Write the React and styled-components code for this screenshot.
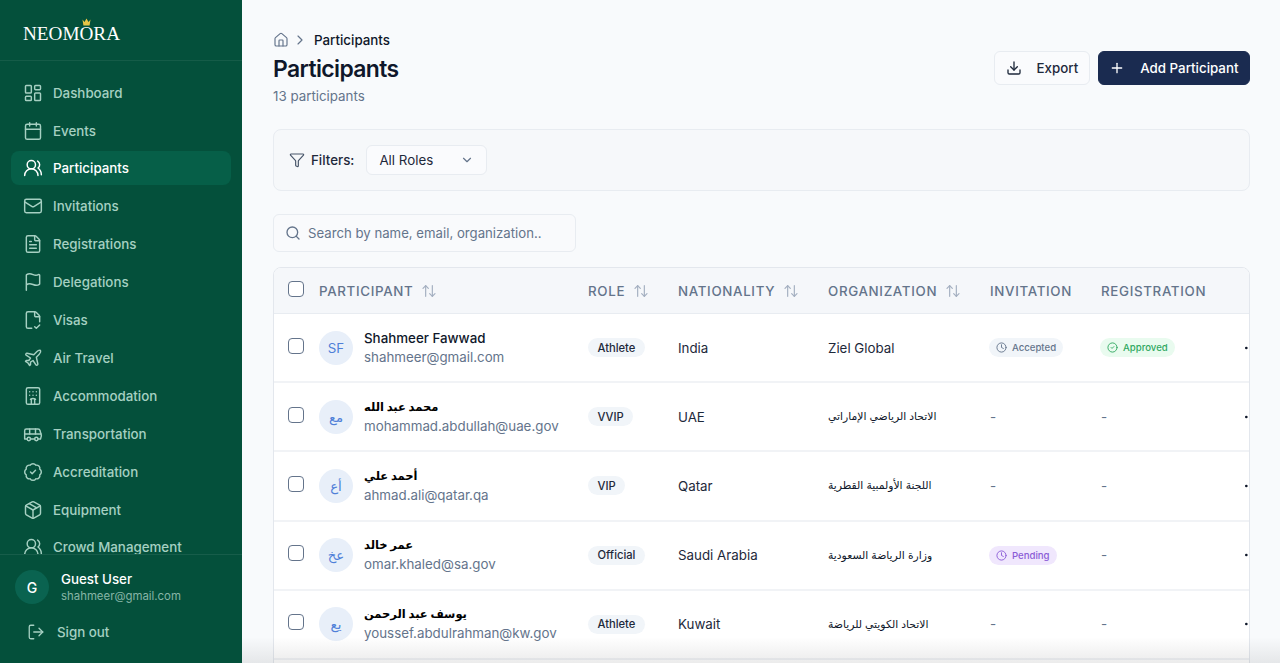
import styled, { createGlobalStyle } from "styled-components"
import {
  ArrowUpDown, BadgeCheck, Bus, Calendar, ChevronDown, ChevronRight, CircleCheck, Clock, Download, Ellipsis,
  FileCheck2, FileText, Flag, Funnel, Hotel, House, LayoutDashboard, LogOut, Mail, Package, Plane, Plus, Search, UsersRound,
} from "lucide-react"

const GlobalStyle = createGlobalStyle`
  html, body, #root {
    margin: 0;
    height: 100%;
  }
  body {
    font-family: Inter, "Noto Sans", "DejaVu Sans", sans-serif;
    overflow: hidden;
    background: #f8fafc;
  }
  * {
    box-sizing: border-box;
  }
`

const Page = styled.div`
  display: flex;
  height: 100%;
`

const Sidebar = styled.aside`
  width: 242px;
  flex-shrink: 0;
  display: flex;
  flex-direction: column;
  background: #04503b;
`
const LogoBar = styled.div`
  height: 61px;
  flex-shrink: 0;
  padding: 8px 23px 0;
  display: flex;
  align-items: center;
  border-bottom: 1px solid rgba(255, 255, 255, 0.07);
`
const Logo = styled.div`
  position: relative;
  font-family: "Liberation Serif", serif;
  font-size: 19.2px;
  line-height: 24px;
  color: #fff;
`
const Crown = styled.svg`
  position: absolute;
  left: 59px;
  top: -4px;
`
const Nav = styled.nav`
  flex: 1;
  min-height: 0;
  overflow: hidden;
  padding: 14.6px 11px 0;
  display: flex;
  flex-direction: column;
  gap: 3.92px;
`
const NavItem = styled.a`
  height: 34px;
  flex-shrink: 0;
  padding: 0 12px;
  display: flex;
  align-items: center;
  gap: 10px;
  border-radius: 8px;
  font-size: 13.33px;
  font-weight: 500;
  color: ${props => (props.$active ? "#ffffff" : "#a6d0c2")};
  background: ${props => (props.$active ? "#065f48" : "transparent")};
`
const SideFooter = styled.div`
  flex-shrink: 0;
  padding: 15px 15px 15px;
  border-top: 1px solid rgba(255, 255, 255, 0.08);
`
const UserRow = styled.div`
  display: flex;
  align-items: center;
  gap: 12px;
`
const UserAvatar = styled.div`
  width: 34px;
  height: 34px;
  border-radius: 50%;
  background: #0a6350;
  color: #fff;
  display: flex;
  align-items: center;
  justify-content: center;
  font-size: 14px;
  font-weight: 500;
`
const UserName = styled.div`
  font-size: 13.33px;
  line-height: 18px;
  font-weight: 500;
  color: #fff;
`
const UserMail = styled.div`
  font-size: 11.4px;
  line-height: 16px;
  color: #86b5a6;
`
const SignOut = styled.div`
  height: 32px;
  margin-top: 12px;
  padding-left: 12px;
  display: flex;
  align-items: center;
  gap: 12px;
  font-size: 13.33px;
  font-weight: 500;
  color: #a6d0c2;
`

const Main = styled.main`
  position: relative;
  flex: 1;
  min-width: 0;
  height: 100%;
  overflow: hidden;
  padding: 29px 30px 0 31px;
`
const BottomShade = styled.div`
  position: absolute;
  left: 0;
  right: 0;
  bottom: 0;
  height: 26px;
  background: linear-gradient(to bottom, rgba(40, 40, 40, 0), rgba(40, 40, 40, 0.09));
  pointer-events: none;
`
const Header = styled.div`
  display: flex;
  justify-content: space-between;
  align-items: flex-start;
`
const Breadcrumb = styled.div`
  height: 20px;
  margin-top: 1px;
  display: flex;
  align-items: center;
  gap: 3px;
  font-size: 13.33px;
  font-weight: 500;
  color: #0f172a;
  svg {
    color: #64748b;
  }
  span {
    margin-left: 3px;
  }
`
const Title = styled.h1`
  margin: 2px 0 0;
  font-size: 22.9px;
  line-height: 34px;
  font-weight: 600;
  letter-spacing: -0.6px;
  color: #0f172a;
`
const SubTitle = styled.div`
  margin-top: -1px;
  font-size: 13.33px;
  line-height: 22px;
  color: #64748b;
`
const Actions = styled.div`
  margin-top: 22px;
  display: flex;
  gap: 8px;
`
const Button = styled.button`
  height: 34px;
  padding: 0 10.5px;
  display: flex;
  align-items: center;
  gap: 15px;
  border-radius: 6px;
  font-family: inherit;
  font-size: 13.33px;
  font-weight: 500;
  border: 1px solid ${props => (props.$primary ? "#1a2b50" : "#e8ecf1")};
  background: ${props => (props.$primary ? "#1a2b50" : "#fafbfd")};
  color: ${props => (props.$primary ? "#ffffff" : "#1e293b")};
`
const FilterBar = styled.div`
  height: 62px;
  margin-top: 22px;
  padding: 0 15px;
  display: flex;
  align-items: center;
  border: 1px solid #e8ecf1;
  border-radius: 8px;
  background: #f6f8fa;
  font-size: 13.33px;
  svg {
    flex-shrink: 0;
  }
`
const FilterLabel = styled.span`
  margin: 0 12px 0 6px;
  font-weight: 500;
  color: #1e293b;
`
const Select = styled.div`
  width: 121px;
  height: 30px;
  padding: 0 12px;
  display: flex;
  align-items: center;
  justify-content: space-between;
  border: 1px solid #e8ecf1;
  border-radius: 6px;
  background: #fafbfd;
  color: #1e293b;
`
const SearchBox = styled.div`
  width: 303px;
  height: 38px;
  margin-top: 23px;
  padding: 0 11px;
  display: flex;
  align-items: center;
  gap: 7px;
  border: 1px solid #e8ecf1;
  border-radius: 6px;
  background: #f9fafc;
  font-size: 13.2px;
  color: #64748b;
`
const Table = styled.div`
  margin-top: 15px;
  overflow: hidden;
  background: #fff;
  border: 1px solid #e3e7ed;
  border-radius: 8px 8px 0 0;
`
const Row = styled.div`
  display: grid;
  grid-template-columns: 45px 269px 90px 150px 162px 111px 142px 40px;
  align-items: center;
  height: ${props => (props.$head ? "46px" : "69.2px")};
  background: ${props => (props.$head ? "#f5f7fa" : "#ffffff")};
  border-bottom: ${props => (props.$head ? "1px solid #e8ecf1" : "2px solid #f1f3f6")};
`
const Spacer = styled.div`
  height: 69px;
`
const CheckCell = styled.div`
  padding-left: 14px;
  margin-top: -4px;
  display: flex;
`
const CheckBox = styled.span`
  width: 16px;
  height: 16px;
  border: 1.5px solid #64748b;
  border-radius: 4px;
  background: #fff;
`
const HeadCell = styled.div`
  display: flex;
  align-items: center;
  gap: 8px;
  font-size: 13.33px;
  font-weight: 500;
  letter-spacing: 0.67px;
  white-space: nowrap;
  color: #64748b;
  svg {
    color: #a3afc0;
  }
`
const Person = styled.div`
  display: flex;
  align-items: center;
  gap: 11px;
`
const Avatar = styled.div`
  width: 34px;
  height: 34px;
  border-radius: 50%;
  flex-shrink: 0;
  background: #e8eff9;
  color: #4f7fd8;
  font-size: 13.33px;
  display: flex;
  align-items: center;
  justify-content: center;
`
const Name = styled.div`
  font-size: ${props => (props.$arabic ? "11.5px" : "13.33px")};
  line-height: 19px;
  font-weight: ${props => (props.$arabic ? 700 : 500)};
  color: ${props => (props.$arabic ? "#000000" : "#0f172a")};
`
const Email = styled.div`
  font-size: 13.33px;
  line-height: 19px;
  color: #64748b;
`
const RoleBadge = styled.span`
  justify-self: start;
  padding: 0 9.5px;
  height: 19px;
  display: inline-flex;
  align-items: center;
  border-radius: 10px;
  background: #f1f5f9;
  color: #1e293b;
  font-size: 11.2px;
  font-weight: 500;
`
const Text = styled.div`
  font-size: ${props => (props.$arabic ? "10.8px" : "13.33px")};
  color: ${props => (props.$arabic ? "#0f172a" : "#1e293b")};
`
const Status = styled.span`
  justify-self: start;
  height: 19px;
  margin-left: -1px;
  padding: 0 7px;
  display: inline-flex;
  align-items: center;
  gap: 5px;
  border-radius: 10px;
  font-size: 9.6px;
  font-weight: 500;
  background: ${props => props.$bg};
  color: ${props => props.$color};
`
const Dash = styled.div`
  font-size: 13.33px;
  color: #64748b;
`
const Dots = styled.div`
  display: flex;
  color: #0f172a;
`

const navItems = [
  ["Dashboard", LayoutDashboard],
  ["Events", Calendar],
  ["Participants", UsersRound],
  ["Invitations", Mail],
  ["Registrations", FileText],
  ["Delegations", Flag],
  ["Visas", FileCheck2],
  ["Air Travel", Plane],
  ["Accommodation", Hotel],
  ["Transportation", Bus],
  ["Accreditation", BadgeCheck],
  ["Equipment", Package],
  ["Crowd Management", UsersRound],
]

const statusKinds = {
  Accepted: { bg: "#f1f5f9", color: "#64748b", Icon: Clock },
  Approved: { bg: "#e9fbef", color: "#2fa85f", Icon: CircleCheck },
  Pending: { bg: "#f0e7fd", color: "#8b5cd6", Icon: Clock },
}

const participants = [
  { initials: "SF", name: "Shahmeer Fawwad", email: "shahmeer@gmail.com", role: "Athlete", nationality: "India", org: "Ziel Global", invitation: "Accepted", registration: "Approved" },
  { arabic: true, initials: "مع", name: "محمد عبد الله", email: "mohammad.abdullah@uae.gov", role: "VVIP", nationality: "UAE", org: "الاتحاد الرياضي الإماراتي" },
  { arabic: true, initials: "أع", name: "أحمد علي", email: "ahmad.ali@qatar.qa", role: "VIP", nationality: "Qatar", org: "اللجنة الأولمبية القطرية" },
  { arabic: true, initials: "عخ", name: "عمر خالد", email: "omar.khaled@sa.gov", role: "Official", nationality: "Saudi Arabia", org: "وزارة الرياضة السعودية", invitation: "Pending" },
  { arabic: true, initials: "يع", name: "يوسف عبد الرحمن", email: "youssef.abdulrahman@kw.gov", role: "Athlete", nationality: "Kuwait", org: "الاتحاد الكويتي للرياضة" },
]

const StatusCell = ({ value }) => {
  if (!value) return <Dash>-</Dash>
  const { bg, color, Icon } = statusKinds[value]
  return (
    <Status $bg={bg} $color={color}>
      <Icon size={11} />
      {value}
    </Status>
  )
}

const SortHead = ({ label }) => (
  <HeadCell>
    {label}
    <ArrowUpDown size={16} strokeWidth={1.75} />
  </HeadCell>
)

const App = () => {
  return (
    <Page>
      <GlobalStyle />
      <Sidebar>
        <LogoBar>
          <Logo>
            NEOMORA
            <Crown width="9" height="8" viewBox="0 0 9 8">
              <path d="M0.5 1.5 L2.5 4 L4.5 0.5 L6.5 4 L8.5 1.5 L7.6 7.5 L1.4 7.5 Z" fill="#e8c547" />
            </Crown>
          </Logo>
        </LogoBar>
        <Nav>
          {navItems.map(([label, Icon]) => (
            <NavItem key={label} $active={label === "Participants"}>
              <Icon size={20} strokeWidth={1.75} />
              {label}
            </NavItem>
          ))}
        </Nav>
        <SideFooter>
          <UserRow>
            <UserAvatar>G</UserAvatar>
            <div>
              <UserName>Guest User</UserName>
              <UserMail>shahmeer@gmail.com</UserMail>
            </div>
          </UserRow>
          <SignOut>
            <LogOut size={18} strokeWidth={1.75} />
            Sign out
          </SignOut>
        </SideFooter>
      </Sidebar>
      <Main>
        <Header>
          <div>
            <Breadcrumb>
              <House size={16} strokeWidth={1.75} />
              <ChevronRight size={16} strokeWidth={1.75} />
              <span>Participants</span>
            </Breadcrumb>
            <Title>Participants</Title>
            <SubTitle>13 participants</SubTitle>
          </div>
          <Actions>
            <Button>
              <Download size={16} />
              Export
            </Button>
            <Button $primary>
              <Plus size={16} />
              Add Participant
            </Button>
          </Actions>
        </Header>
        <FilterBar>
          <Funnel size={16} strokeWidth={1.75} color="#475569" />
          <FilterLabel>Filters:</FilterLabel>
          <Select>
            All Roles
            <ChevronDown size={14} color="#64748b" />
          </Select>
        </FilterBar>
        <SearchBox>
          <Search size={16} />
          Search by name, email, organization..
        </SearchBox>
        <Table>
          <Row $head>
            <CheckCell><CheckBox /></CheckCell>
            <SortHead label="PARTICIPANT" />
            <SortHead label="ROLE" />
            <SortHead label="NATIONALITY" />
            <SortHead label="ORGANIZATION" />
            <HeadCell>INVITATION</HeadCell>
            <HeadCell>REGISTRATION</HeadCell>
          </Row>
          {participants.map(p => (
            <Row key={p.email}>
              <CheckCell><CheckBox /></CheckCell>
              <Person>
                <Avatar>{p.initials}</Avatar>
                <div>
                  <Name $arabic={p.arabic}>{p.name}</Name>
                  <Email>{p.email}</Email>
                </div>
              </Person>
              <RoleBadge>{p.role}</RoleBadge>
              <Text>{p.nationality}</Text>
              <Text $arabic={p.arabic}>{p.org}</Text>
              <StatusCell value={p.invitation} />
              <StatusCell value={p.registration} />
              <Dots><Ellipsis size={16} /></Dots>
            </Row>
          ))}
          <Spacer />
        </Table>
        <BottomShade />
      </Main>
    </Page>
  )
}

export default App
